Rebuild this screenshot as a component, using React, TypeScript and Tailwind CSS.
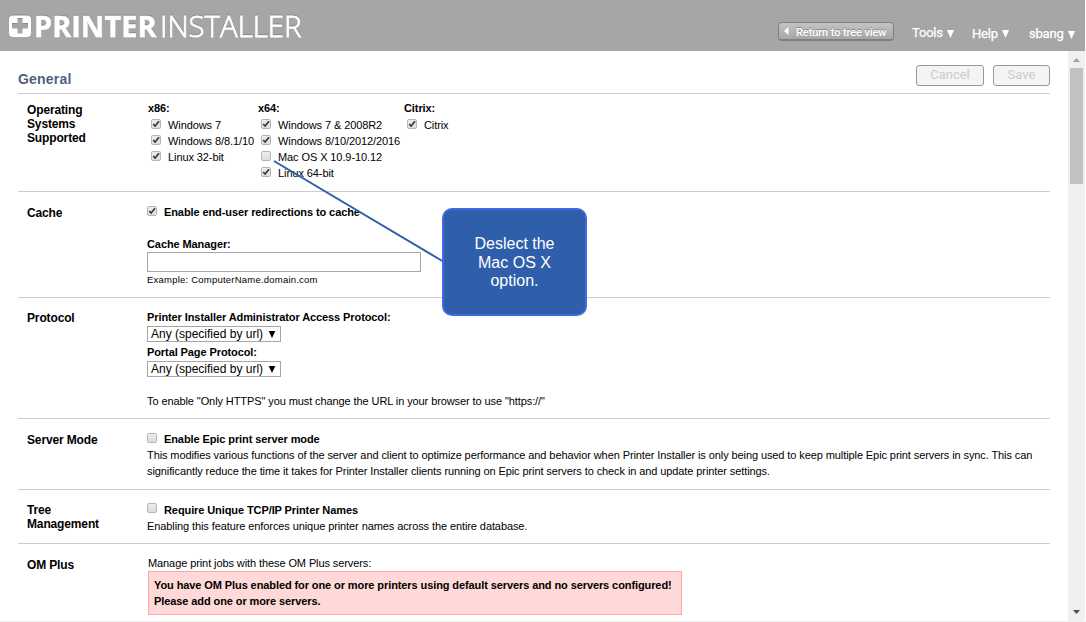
import type { ReactNode } from "react";

function Check({ on = false }: { on?: boolean }) {
  return (
    <svg width="10" height="10" viewBox="0 0 10 10" className="shrink-0">
      <defs>
        <linearGradient id="box" x1="0" y1="0" x2="0" y2="1">
          <stop offset="0" stopColor="#eeeeee" />
          <stop offset="1" stopColor="#dcdcdc" />
        </linearGradient>
      </defs>
      <rect x="0.5" y="0.5" width="9" height="9" rx="1.2" fill="url(#box)" stroke="#b4b4b4" />
      {on && <path d="M2.2 5 L4.1 7 L8 2.2" fill="none" stroke="#3c3c3c" strokeWidth="1.8" />}
    </svg>
  );
}

function Option({ on, children }: { on?: boolean; children: ReactNode }) {
  return (
    <label className="flex h-4 items-start whitespace-nowrap pl-[3px]">
      <span className="flex pt-[2px]"><Check on={on} /></span>
      <span className="ml-[7px]">{children}</span>
    </label>
  );
}

function Section({ title, className, children }: { title: ReactNode; className: string; children: ReactNode }) {
  return (
    <section className={`flex border-b border-[#ccc] ${className}`}>
      <h2 className="w-[129px] shrink-0 pl-[9px] pt-[9px] text-[12px] font-bold leading-[14px] tracking-[-0.14px]">{title}</h2>
      <div className="min-w-0 flex-1">{children}</div>
    </section>
  );
}

function Select() {
  return (
    <div className="flex h-4 w-[134px] items-center justify-between whitespace-nowrap border border-[#a6a6a6] pl-[3px] pr-[4px] text-[12px] leading-[14px]">
      <span className="tracking-[0px]">Any (specified by url)</span>
      <svg width="8" height="7" viewBox="0 0 8 7"><path d="M0.7 0 H7.3 L4 7 Z" fill="#000" /></svg>
    </div>
  );
}

function Menu({ label, className }: { label: string; className: string }) {
  return (
    <div className={`flex items-center gap-[4px] whitespace-nowrap font-['Roboto',sans-serif] text-[13px] leading-4 tracking-[-0.2px] text-white ${className}`}>
      <span className="[-webkit-text-stroke:0.25px_white]">{label}</span>
      <svg width="7" height="8" viewBox="0 0 7 8" className="mt-[1px]"><path d="M0 0 H7 L3.5 8 Z" fill="#fff" /></svg>
    </div>
  );
}

function Logo() {
  return (
    <svg width="310" height="51" viewBox="0 0 310 51" className="shrink-0">
      <rect x="9" y="14.5" width="22" height="21.5" rx="4" fill="#8c8c8c" />
      <rect x="9" y="15.5" width="22" height="21.5" rx="4" fill="#fff" />
      <path d="M17.5 18.5h5v5h5.5v5h-5.5v5h-5v-5H12v-5h5.5z" fill="#a6a6a6" />
      <path d="M17.5 18.5h5M12 23.5h5.5M22.5 23.5H28" stroke="#888" fill="none" />
      <g fill="#fff" fontFamily="'Open Sans', sans-serif" fontSize="29" style={{ filter: "drop-shadow(0 -1px 0 #8a8a8a)" }}>
        <text x="34" y="36.5" fontWeight="700" stroke="#fff" strokeWidth="0.5" letterSpacing="0" textLength="122.5" lengthAdjust="spacingAndGlyphs">PRINTER</text>
        <text x="160" y="36.5" fontWeight="300" stroke="#fff" strokeWidth="0.8" letterSpacing="0" textLength="141.5" lengthAdjust="spacingAndGlyphs">INSTALLER</text>
      </g>
    </svg>
  );
}

export default function App() {
  return (
    <div className="relative flex h-[622px] w-[1086px] flex-col overflow-hidden bg-white font-['Liberation_Sans',Arial,sans-serif] text-[11px] leading-4 tracking-[-0.093px] text-black">
      <header className="mr-px flex h-[51px] shrink-0 items-start bg-[#a6a6a6]">
        <Logo />
        <button className="ml-[468px] mt-[22px] flex h-[19px] w-[116px] shrink-0 items-center rounded-[4px] border border-b-2 border-[#7f7f7f] bg-gradient-to-b from-[#c4c4c4] to-[#a6a6a6] pl-[5px] font-['Roboto',sans-serif] text-[11px] font-medium leading-4 text-white">
          <svg width="5" height="8" viewBox="0 0 5 8"><path d="M4.5 0V8L0 4Z" fill="#fff" /></svg>
          <span className="ml-[7px] whitespace-nowrap pt-[3px] [text-shadow:0_-1px_0_#888]">Return to tree view</span>
        </button>
        <nav className="flex">
          <Menu label="Tools" className="ml-[18px] mt-[24px] w-[60px]" />
          <Menu label="Help" className="mt-[25px] w-[57px]" />
          <Menu label="sbang" className="mt-[26px]" />
        </nav>
      </header>
      <div className="flex h-[570px] shrink-0">
        <main className="w-[1068px] overflow-hidden pl-[18px] pr-[18px]">
          <div className="flex h-[43px] items-start border-b border-[#ccc]">
            <h1 className="flex-1 pt-[20px] text-[14px] font-bold leading-4 tracking-[0.2px] text-[#505f7f]">General</h1>
            <button className="mt-[14px] h-[21px] w-[68px] rounded-[3px] border border-[#999] bg-[#f4f4f4] pb-[2px] font-['Roboto',sans-serif] text-[13px] leading-4 tracking-normal text-[#ccc]">Cancel</button>
            <button className="ml-[9px] mt-[14px] h-[21px] w-[57px] rounded-[3px] border border-[#999] bg-[#f4f4f4] pb-[2px] font-['Roboto',sans-serif] text-[13px] leading-4 tracking-normal text-[#ccc]">Save</button>
          </div>
          <Section title={<>Operating<br />Systems<br />Supported</>} className="h-[98px]">
            <div className="flex pl-[1px] pt-[6px]">
              <div className="w-[110px]">
                <b className="mb-[1px] block">x86:</b>
                <Option on>Windows 7</Option>
                <Option on>Windows 8/8.1/10</Option>
                <Option on>Linux 32-bit</Option>
              </div>
              <div className="w-[146px]">
                <b className="mb-[1px] block">x64:</b>
                <Option on>Windows 7 &amp; 2008R2</Option>
                <Option on>Windows 8/10/2012/2016</Option>
                <Option>Mac OS X 10.9-10.12</Option>
                <Option on>Linux 64-bit</Option>
              </div>
              <div>
                <b className="mb-[1px] block">Citrix:</b>
                <Option on>Citrix</Option>
              </div>
            </div>
          </Section>
          <Section title={<div className="pt-[5px]">Cache</div>} className="h-[106px]">
            <div className="flex pt-[12px]">
              <span className="flex h-4 pt-[2px]"><Check on /></span>
              <b className="ml-[7px]">Enable end-user redirections to cache</b>
            </div>
            <b className="mt-4 block">Cache Manager:</b>
            <input aria-label="Cache Manager" className="block h-5 w-[274px] border border-[#a6a6a6] bg-white" />
            <p className="text-[9.5px] tracking-[0.22px]">Example: ComputerName.domain.com</p>
          </Section>
          <Section title={<div className="pt-[4px]">Protocol</div>} className="h-[121px]">
            <b className="mt-[11px] block h-[17px]">Printer Installer Administrator Access Protocol:</b>
            <Select />
            <b className="mt-[2px] block h-[17px]">Portal Page Protocol:</b>
            <Select />
            <p className="mt-4">To enable "Only HTTPS" you must change the URL in your browser to use "https://"</p>
          </Section>
          <Section title={<div className="pt-[5px]">Server Mode</div>} className="h-[71px]">
            <div className="flex pt-[12px]">
              <span className="flex h-4 pt-[2px]"><Check /></span>
              <b className="ml-[7px]">Enable Epic print server mode</b>
            </div>
            <p className="whitespace-nowrap">This modifies various functions of the server and client to optimize performance and behavior when Printer Installer is only being used to keep multiple Epic print servers in sync. This can<br />significantly reduce the time it takes for Printer Installer clients running on Epic print servers to check in and update printer settings.</p>
          </Section>
          <Section title={<div className="pt-[4px]">Tree<br />Management</div>} className="h-[54px]">
            <div className="flex pt-[12px]">
              <span className="flex h-4 pt-[1px]"><Check /></span>
              <b className="ml-[7px]">Require Unique TCP/IP Printer Names</b>
            </div>
            <p>Enabling this feature enforces unique printer names across the entire database.</p>
          </Section>
          <Section title={<div className="pt-[5px]">OM Plus</div>} className="h-[100px]">
            <div className="pl-[1px] pt-[11px]">
              <p>Manage print jobs with these OM Plus servers:</p>
              <div className="h-[44px] w-[534px] whitespace-nowrap border border-[#ffa6a6] bg-[#ffd8d8] pl-[5px] pt-[5px] font-bold">
                You have OM Plus enabled for one or more printers using default servers and no servers configured!<br />Please add one or more servers.
              </div>
            </div>
          </Section>
        </main>
        <aside className="flex w-[18px] flex-col items-center border-r border-white bg-[#f0f0f0]">
          <svg width="7" height="4" viewBox="0 0 7 4" className="mt-[7px]"><path d="M0 4L3.5 0L7 4Z" fill="#a0a0a0" /></svg>
          <div className="mt-[6px] h-[116px] w-[13px] bg-[#c1c1c1]" />
          <svg width="7" height="4" viewBox="0 0 7 4" className="mb-[7px] mt-auto"><path d="M0 0L3.5 4L7 0Z" fill="#505050" /></svg>
        </aside>
      </div>
      <div className="h-px bg-[#f0f0f0]" />
      <svg className="absolute left-[270px] top-[155px]" width="180" height="110" viewBox="0 0 180 110">
        <path d="M4 6L174 107" stroke="#2f5fab" strokeWidth="2" />
      </svg>
      <div className="absolute left-[442px] top-[208px] flex h-[108px] w-[145px] items-center justify-center rounded-[10px] border-2 border-[#4169e1] bg-[#2f5fab] text-center text-[16px] leading-[18.5px] tracking-normal text-white">
        <p className="pt-[2px]">Deslect the<br />Mac OS X<br />option.</p>
      </div>
    </div>
  );
}
